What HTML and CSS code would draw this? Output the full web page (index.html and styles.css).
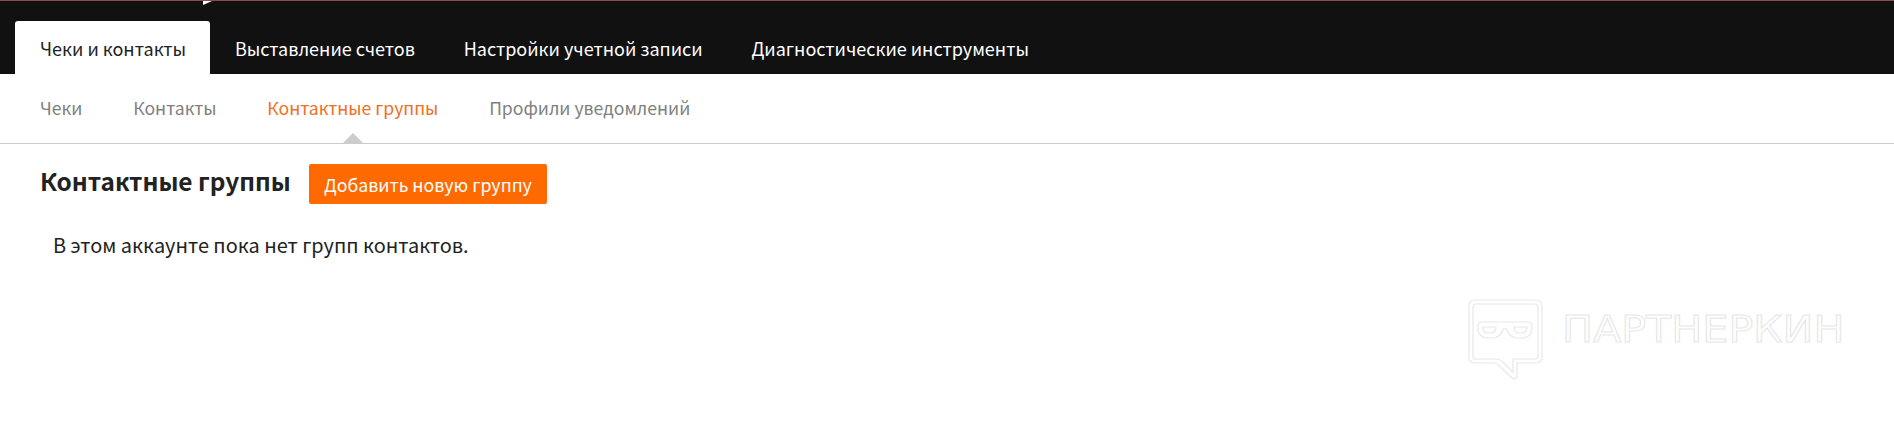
FILE: index.html
```html
<!DOCTYPE html>
<html lang="en">
<head>
    <meta charset="UTF-8">
    <title>Контактные группы</title>
    <link rel="stylesheet" href="styles.css">
</head>
<body>
    <header class="top-bar">
        <span class="logo-tail"></span>
        <nav class="main-tabs">
            <a href="#" class="main-tab active">Чеки и контакты</a>
            <a href="#" class="main-tab">Выставление счетов</a>
            <a href="#" class="main-tab">Настройки учетной записи</a>
            <a href="#" class="main-tab">Диагностические инструменты</a>
        </nav>
    </header>

    <nav class="sub-tabs">
        <a href="#" class="sub-tab">Чеки</a>
        <a href="#" class="sub-tab">Контакты</a>
        <a href="#" class="sub-tab active">Контактные группы</a>
        <a href="#" class="sub-tab">Профили уведомлений</a>
    </nav>

    <main class="content">
        <div class="page-head">
            <h1>Контактные группы</h1>
            <a href="#" class="add-button">Добавить новую группу</a>
        </div>
        <p class="empty-note">В этом аккаунте пока нет групп контактов.</p>
    </main>

    <div class="watermark">
        <svg class="watermark-icon" width="76" height="82" viewBox="0 0 76 82" fill="none" stroke="#e8e8e8" stroke-width="1.2">
            <path d="M7 1H68Q74 1 74 7V58Q74 64 68 64H49V77Q49 80 46.500 80Q45 80 43.500 78.500L31 66.500Q28.500 64 25 64H7Q1 64 1 58V7Q1 1 7 1Z"/>
            <path d="M8 5H67Q70 5 70 8V57Q70 60 67 60H45V73L34 62.500Q32 60 28 60H8Q5 60 5 57V8Q5 5 8 5Z"/>
            <path d="M14 23H60Q64 23 64 27V29Q64 39 53 39H50Q42 39 39 31Q37 27.500 35 31Q32 39 24 39H21Q10 39 10 29V27Q10 23 14 23Z"/>
            <path d="M15 28H28Q28 34 22 34H20Q15 34 15 28ZM46 28H59Q59 34 53 34H51Q46 34 46 28Z"/>
        </svg>
        <span class="watermark-text">ПАРТНЕРКИН</span>
    </div>
</body>
</html>
```

FILE: styles.css
```css
* {
    margin: 0;
    padding: 0;
    box-sizing: border-box;
}

body {
    font-family: "Noto Sans CJK SC", "Noto Sans", sans-serif;
    font-size: 18px;
    background: #fff;
    color: #222;
    position: relative;
    height: 432px;
    overflow: hidden;
}

a {
    text-decoration: none;
}

.top-bar {
    position: relative;
    height: 74px;
    padding: 20px 0 0 15px;
    background: #111;
    border-top: 1px solid #8a4a50;
}

.logo-tail {
    position: absolute;
    left: 203px;
    top: 0;
    width: 9px;
    height: 4px;
    background: #fff;
    clip-path: polygon(0 0, 100% 0, 0 100%);
}

.main-tabs {
    display: flex;
    height: 53px;
}

.main-tab {
    display: flex;
    align-items: center;
    padding: 0 24.400px;
    color: #fff;
    border-radius: 3px 3px 0 0;
}

.main-tab.active {
    padding: 0 24px 0 25px;
    margin-right: 0.400px;
    background: #fff;
    color: #222;
}

.sub-tabs {
    display: flex;
    gap: 50.800px;
    height: 70px;
    padding: 0 0 0 40px;
    align-items: center;
    border-bottom: 1px solid #ccc;
    font-size: 17.600px;
}

.sub-tab {
    color: #808080;
    padding-bottom: 2px;
}

.sub-tab.active {
    color: #ef6f22;
    position: relative;
}

.sub-tab.active::after {
    content: "";
    position: absolute;
    left: 50%;
    bottom: -22px;
    margin-left: -11px;
    border: 11px solid transparent;
    border-top: 0;
    border-bottom: 11px solid #ccc;
}

.content {
    padding: 20px 40px 0;
}

.page-head {
    display: flex;
    align-items: flex-start;
    gap: 18.500px;
}

h1 {
    font-size: 24.400px;
    font-weight: 700;
    line-height: 34px;
}

.add-button {
    display: flex;
    align-items: center;
    height: 40px;
    padding: 0 14.700px;
    background: #ff6a00;
    color: #fff;
    border-radius: 2px;
    font-size: 17.800px;
}

.empty-note {
    margin: 26px 0 0 13px;
    font-size: 19.900px;
    line-height: 30px;
    color: #222;
}

.watermark {
    position: absolute;
    left: 1468px;
    top: 299px;
    display: flex;
    align-items: flex-start;
    gap: 18px;
}

.watermark-text {
    font-family: "DejaVu Sans", sans-serif;
    font-size: 37px;
    line-height: 44px;
    color: transparent;
    -webkit-text-stroke: 1px #e6e6e6;
    margin-top: 9px;
    transform: scaleX(1.115);
    transform-origin: left center;
}
```
